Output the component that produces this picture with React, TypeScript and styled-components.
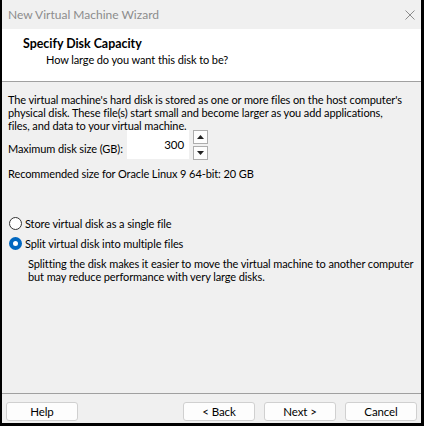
import { createGlobalStyle } from "styled-components";
import styled from "styled-components";

const GlobalStyle = createGlobalStyle`
  html, body {
    margin: 0;
    padding: 0;
    background: #000;
  }
  body {
    font-family: Lato, "Noto Sans", "Liberation Sans", sans-serif;
    font-size: 11px;
    letter-spacing: -0.1px;
    color: #000;
  }
`;

const Frame = styled.div`
  width: 424px;
  height: 426px;
  box-sizing: border-box;
  border-left: 2px solid #000;
  border-right: 3px solid #000;
  border-bottom: 3px solid #000;
  background: #f0f0f0;
  display: flex;
  flex-direction: column;
`;

const TitleBar = styled.div`
  height: 29px;
  display: flex;
  align-items: center;
  justify-content: space-between;
  padding: 0 6px 0 6px;
  color: #8c8c8c;
  font-size: 12px;
  letter-spacing: 0;
`;

const CloseIcon = styled.svg`
  width: 10px;
  height: 10px;
  margin-top: 1px;
`;

const Header = styled.div`
  height: 53px;
  background: #fff;
  border-bottom: 1px solid #a0a0a0;
  padding: 7px 0 0 21px;
  box-sizing: border-box;
`;

const HeaderTitle = styled.div`
  font-weight: 700;
  font-size: 12.4px;
  letter-spacing: 0;
  line-height: 15px;
`;

const HeaderSub = styled.div`
  padding: 1px 0 0 23px;
  line-height: 16px;
`;

const Body = styled.div`
  flex: 1;
  padding: 11px 6px 0 6px;
  display: flex;
  flex-direction: column;
`;

const Para = styled.p`
  margin: 0;
  line-height: 13px;
  white-space: nowrap;
`;

const SizeRow = styled.div`
  display: flex;
  align-items: flex-end;
  margin-top: -2px;
  height: 29px;
`;

const SizeLabel = styled.span`
  width: 119px;
  white-space: nowrap;
  line-height: 13px;
  padding-bottom: 4px;
`;

const NumberBox = styled.div`
  width: 62px;
  height: 29px;
  background: #fff;
  text-align: right;
  padding-right: 5px;
  box-sizing: border-box;
  line-height: 29px;
  font-size: 11.5px;
`;

const Spinner = styled.div`
  display: flex;
  flex-direction: column;
  gap: 2px;
  margin-left: 4px;
  align-self: center;
`;

const SpinBtn = styled.div`
  width: 15px;
  height: 14px;
  border: 1px solid #adadad;
  background: #fdfdfd;
  box-sizing: border-box;
  display: flex;
  align-items: center;
  justify-content: center;
`;

const Recommended = styled.div`
  margin-top: 8px;
  line-height: 13px;
`;

const Options = styled.div`
  margin-top: 36px;
  display: flex;
  flex-direction: column;
  gap: 5px;
`;

const RadioRow = styled.div`
  display: flex;
  align-items: center;
  gap: 3px;
  height: 15px;
`;

const Radio = styled.span<{ $checked?: boolean }>`
  width: 13px;
  height: 13px;
  border-radius: 50%;
  box-sizing: border-box;
  border: ${(p) => (p.$checked ? "4px solid #0067c0" : "1px solid #333")};
  background: #fff;
  margin-left: 1px;
`;

const Note = styled.p`
  margin: 6px 0 0 20px;
  line-height: 13px;
  white-space: nowrap;
`;

const Footer = styled.div`
  border-top: 1px solid #a0a0a0;
  height: 30px;
  box-sizing: border-box;
  display: flex;
  align-items: flex-start;
  padding: 8px 4px 0 4px;
`;

const Button = styled.button`
  width: 72px;
  height: 19px;
  padding: 0;
  background: #fdfdfd;
  border: 1px solid #d0d0d0;
  border-radius: 3px;
  font-family: inherit;
  font-size: 11.5px;
  letter-spacing: -0.1px;
  color: #000;
  line-height: 17px;
`;

const Spacer = styled.div`
  flex: 1;
`;

const ButtonGroup = styled.div`
  display: flex;
  gap: 9px;
`;

function Arrow({ up }: { up?: boolean }) {
  return (
    <svg width="7" height="4" viewBox="0 0 7 4">
      {up ? <polygon points="0,4 7,4 3.5,0" fill="#222" /> : <polygon points="0,0 7,0 3.5,4" fill="#222" />}
    </svg>
  );
}

export default function App() {
  return (
    <>
      <GlobalStyle />
      <Frame>
        <TitleBar>
          <span>New Virtual Machine Wizard</span>
          <CloseIcon viewBox="0 0 10 10">
            <path d="M0.5 0.5 L9.5 9.5 M9.5 0.5 L0.5 9.5" stroke="#8c8c8c" strokeWidth="1" />
          </CloseIcon>
        </TitleBar>
        <Header>
          <HeaderTitle>Specify Disk Capacity</HeaderTitle>
          <HeaderSub>How large do you want this disk to be?</HeaderSub>
        </Header>
        <Body>
          <Para>
            The virtual machine's hard disk is stored as one or more files on the host computer's
            <br />
            physical disk. These file(s) start small and become larger as you add applications,
            <br />
            files, and data to your virtual machine.
          </Para>
          <SizeRow>
            <SizeLabel>Maximum disk size (GB):</SizeLabel>
            <NumberBox>300</NumberBox>
            <Spinner>
              <SpinBtn>
                <Arrow up />
              </SpinBtn>
              <SpinBtn>
                <Arrow />
              </SpinBtn>
            </Spinner>
          </SizeRow>
          <Recommended>Recommended size for Oracle Linux 9 64-bit: 20 GB</Recommended>
          <Options>
            <RadioRow>
              <Radio />
              <span>Store virtual disk as a single file</span>
            </RadioRow>
            <RadioRow>
              <Radio $checked />
              <span>Split virtual disk into multiple files</span>
            </RadioRow>
          </Options>
          <Note>
            Splitting the disk makes it easier to move the virtual machine to another computer
            <br />
            but may reduce performance with very large disks.
          </Note>
        </Body>
        <Footer>
          <Button>Help</Button>
          <Spacer />
          <ButtonGroup>
            <Button>&lt; Back</Button>
            <Button>Next &gt;</Button>
            <Button>Cancel</Button>
          </ButtonGroup>
        </Footer>
      </Frame>
    </>
  );
}
